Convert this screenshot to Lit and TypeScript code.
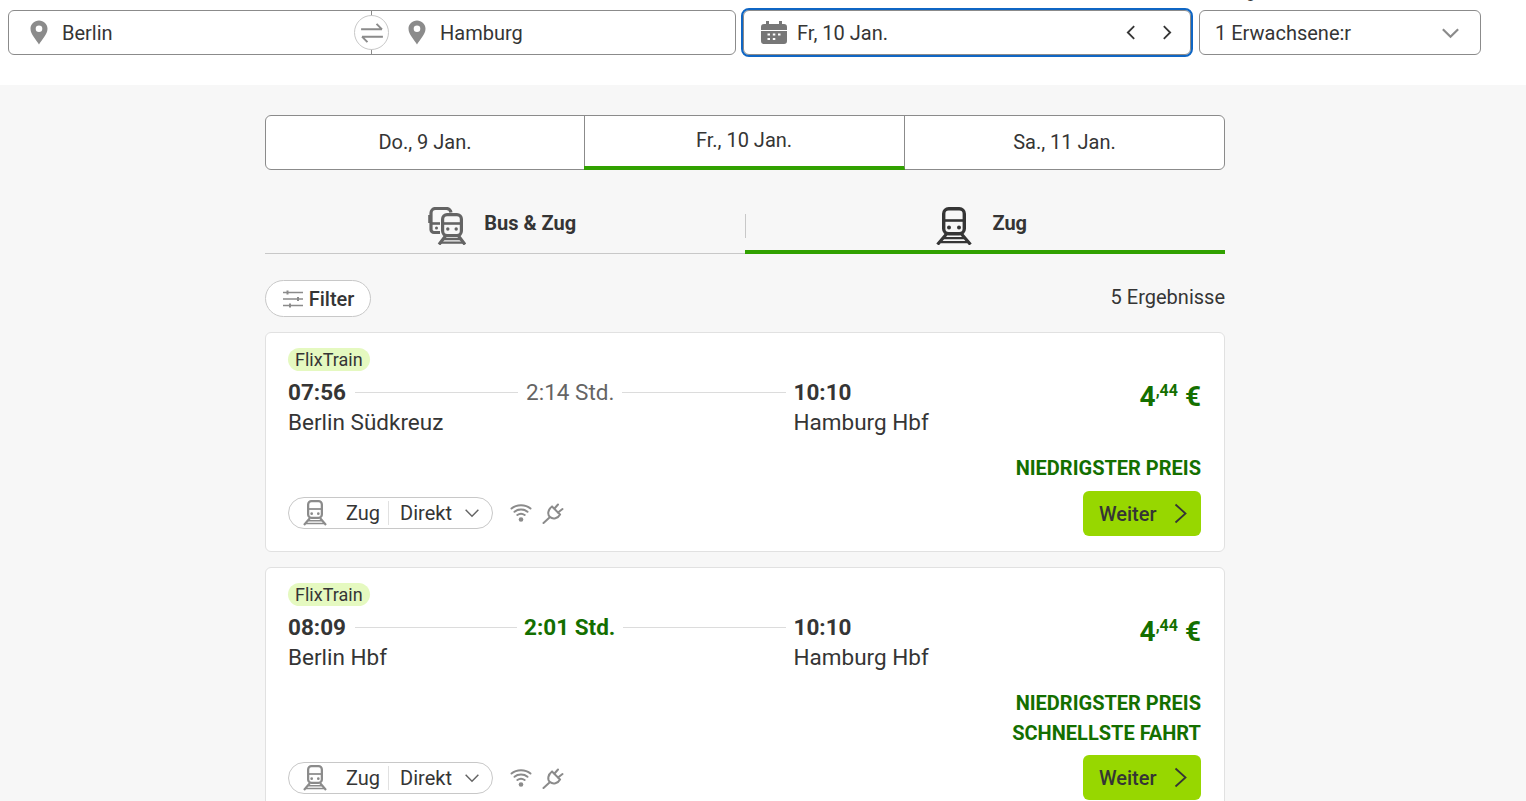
import { LitElement, html, css } from "lit";
import { customElement } from "lit/decorators.js";

const train = (size: number, color: string) => html`<svg width=${size} height=${size * 38 / 36} viewBox="0 0 36 38" fill="none" stroke=${color} stroke-width="3.4">
  <rect x="7.7" y="1.7" width="20.600" height="25" rx="5"/>
  <path d="M7.500 13.500h21" stroke-width="2.600"/>
  <circle cx="13" cy="20.500" r="2" fill=${color} stroke="none"/><circle cx="23" cy="20.500" r="2" fill=${color} stroke="none"/>
  <path d="M10.500 27L1.500 37.500M25.500 27l9 10.500" stroke-width="3.200"/>
  <path d="M8 31.200h20M4.500 35.200h27" stroke-width="2.200"/>
</svg>`;

const busTrain = html`<svg width="38" height="38" viewBox="0 0 38 38" fill="none" stroke="#646464" stroke-width="3.200">
  <path d="M12 25.500H6a3 3 0 0 1-3-3V6a4.500 4.500 0 0 1 4.500-4.500h11a4.500 4.500 0 0 1 4.500 4"/>
  <path d="M1.500 8v8" stroke-width="2.600"/><path d="M3 16.500h9" stroke-width="2.600"/>
  <circle cx="8.500" cy="21" r="1.500" fill="#646464" stroke="none"/>
  <rect x="14.600" y="7.600" width="18.800" height="21" rx="4.500"/>
  <path d="M14.500 16.500h19" stroke-width="2.600"/>
  <circle cx="19.800" cy="22" r="1.700" fill="#646464" stroke="none"/><circle cx="28.200" cy="22" r="1.700" fill="#646464" stroke="none"/>
  <path d="M17.500 29l-6.500 8.500M30.500 29l6.500 8.500" />
  <path d="M16 32.200h16M13 35.700h22" stroke-width="2.200"/>
</svg>`;

const pin = html`<svg class="pin" width="18" height="25" viewBox="0 0 18 25"><path fill-rule="evenodd" fill="#8b8b8b" d="M9 0.500C4.200 0.500 0.500 4.200 0.500 8.800 0.500 14.500 6.500 20 9 24.500 11.500 20 17.500 14.500 17.500 8.800 17.500 4.200 13.800 0.500 9 0.500ZM9 5.500a3.300 3.300 0 1 1 0 6.600 3.300 3.300 0 0 1 0-6.600Z"/></svg>`;

const chevron = (d: "l" | "r" | "d", w: number, h: number, color: string, sw = 2) => {
  const p = d === "l" ? "M9 1L2 8l7 7" : d === "r" ? "M2 1l7 7-7 7" : "M1 2l7 7 7-7";
  const vb = d === "d" ? "0 0 16 11" : "0 0 11 16";
  return html`<svg width=${w} height=${h} viewBox=${vb} fill="none" stroke=${color} stroke-width=${sw}><path d=${p}/></svg>`;
};

const btnChevron = html`<svg width="13" height="21" viewBox="0 0 13 21" fill="none" stroke="#353535" stroke-width="1.800"><path d="M1.500 1.500l10 9-10 9"/></svg>`;

const wifi = html`<svg width="22" height="20" viewBox="0 0 22 20" fill="none" stroke="#8b8b8b" stroke-width="2" stroke-linecap="round">
  <path d="M1.500 5.500C6.500 1 15.500 1 20.500 5.500M4.500 8.800C8 5.800 14 5.800 17.500 8.800M7.300 12C9.500 10.400 12.500 10.400 14.700 12"/>
  <circle cx="11" cy="16.500" r="2.300" fill="#8b8b8b" stroke="none"/>
</svg>`;

const plug = html`<svg width="22" height="22" viewBox="0 0 22 22" fill="none" stroke="#8b8b8b" stroke-width="2" stroke-linecap="round">
  <path d="M10 4.500L18 12.500C16 16.500 11 17.500 8 15 5 12.500 6 7.500 10 4.500Z"/>
  <path d="M12.500 6.500L16 2.500M16 10.500L20.500 7M7.500 15.500L1.500 21"/>
</svg>`;

const filterIcon = html`<svg width="22" height="18" viewBox="0 0 22 18" fill="none" stroke="#8b8b8b" stroke-width="1.600">
  <path d="M1 2.500h20M1 9h20M1 15.500h20"/>
  <path d="M5.500 0.500v4M16 7v4M8 13.500v4" stroke-width="2"/>
</svg>`;

const swap = html`<svg width="24" height="20" viewBox="0 0 26 22" fill="none" stroke="#8b8b8b" stroke-width="2.200"><path d="M1 7h23M18 1l6 6M25 15H2M8 21l-6-6"/></svg>`;

const cal = html`<svg width="26" height="23" viewBox="0 0 26 23"><path fill="#777" d="M5 0h3v3h10V0h3v3h2a3 3 0 0 1 3 3v3H0V6a3 3 0 0 1 3-3h2ZM0 10h26v10a3 3 0 0 1-3 3H3a3 3 0 0 1-3-3Z"/><g fill="#fff"><rect x="6.500" y="12.500" width="2.500" height="2"/><rect x="11.800" y="12.500" width="2.500" height="2"/><rect x="17" y="12.500" width="2.500" height="2"/><rect x="6.500" y="17" width="2.500" height="2"/><rect x="11.800" y="17" width="2.500" height="2"/></g></svg>`;

interface Conn { dep: string; from: string; dur: string; fast: boolean; labels: string[]; }
const conns: Conn[] = [
  { dep: "07:56", from: "Berlin Südkreuz", dur: "2:14 Std.", fast: false, labels: ["NIEDRIGSTER PREIS"] },
  { dep: "08:09", from: "Berlin Hbf", dur: "2:01 Std.", fast: true, labels: ["NIEDRIGSTER PREIS", "SCHNELLSTE FAHRT"] },
];

@customElement("app-root")
export class AppRoot extends LitElement {
  static styles = css`
    :host { display: block; height: 801px; overflow: hidden; background: #f7f7f7; font-family: Roboto, sans-serif; color: #353535; font-size: 20px; }
    .top { height: 85px; box-sizing: border-box; background: #fff; display: flex; gap: 8px; padding: 10px 0 0 8px; }
    .box { height: 45px; box-sizing: border-box; border: 1px solid #8b8b8b; border-radius: 6px; display: flex; align-items: center; background: #fff; }
    .route { width: 728px; position: relative; }
    .route .half { display: flex; align-items: center; height: 100%; box-sizing: border-box; }
    .route .half.a { flex: 0 0 363px; padding-left: 21px; border-right: 1px solid #8b8b8b; }
    .route .half.b { flex: 1; padding-left: 36px; }
    .route .half span { margin-left: 14px; }
    .swap { position: absolute; left: 345px; top: 4px; width: 35px; height: 35px; box-sizing: border-box; border: 1px solid #c8c8c8; border-radius: 50%; background: #fff; display: flex; align-items: center; justify-content: center; }
    .date { width: 448px; margin-left: -1px; padding: 0 18px 0 17px; outline: 2px solid #0f66c4; }
    .date .t { margin-left: 10px; flex: 1; }
    .date .nav { display: flex; gap: 26px; align-items: center; }
    .pax { width: 282px; padding: 0 20px 0 15px; justify-content: space-between; position: relative; }
    .plabel { position: absolute; left: 15px; top: -28px; font-size: 16px; line-height: 20px; }
    main { width: 960px; margin-left: 265px; padding-top: 30px; }
    .days { display: flex; height: 55px; box-sizing: border-box; border: 1px solid #8b8b8b; border-radius: 6px; background: #fff; }
    .day { flex: 1; display: flex; align-items: center; justify-content: center; border-right: 1px solid #8b8b8b; box-sizing: border-box; padding-bottom: 2px; }
    .day:first-child { flex: 0 0 319px; }
    .day:last-child { border-right: 0; }
    .day.on { flex: 0 0 321px; margin-left: -1px; border-bottom: 4px solid #31a100; margin-bottom: -1px; padding-bottom: 3px; }
    .modes { display: flex; height: 84px; box-sizing: border-box; border-bottom: 1px solid #c8c8c8; }
    .mode { flex: 1; display: flex; align-items: center; justify-content: center; gap: 18px; padding: 28px 5px 0 0; margin-bottom: -1px; box-sizing: border-box; font-weight: 700; position: relative; }
    .mode span { margin-bottom: 6px; }
    .mode.off::after { content: ""; position: absolute; right: -1px; top: 44px; height: 24px; width: 1px; background: #c8c8c8; }
    .mode.on { border-bottom: 4px solid #31a100; padding: 32px 6px 0 0; gap: 20px; }
    .bar { display: flex; justify-content: space-between; align-items: center; margin: 26px 0 15px; height: 37px; }
    .bar .count { padding-bottom: 4px; }
    .filter { width: 106px; height: 37px; box-sizing: border-box; border: 1px solid #c8c8c8; border-radius: 19px; background: #fff; display: flex; align-items: center; justify-content: center; gap: 5px; font-weight: 500; }
    .card { background: #fff; border: 1px solid #e1e1e1; border-radius: 6px; box-sizing: border-box; padding: 15px 23px 15px 22px; margin-bottom: 15px; }
    .badge { display: block; width: fit-content; height: 23px; line-height: 23px; padding: 0 7px; background: #e5f9c0; border-radius: 12px; font-size: 18px; }
    .main { display: flex; margin-top: 6px; }
    .left { width: 505.500px; }
    .times { display: flex; align-items: center; height: 30px; }
    .time { font-size: 22.500px; font-weight: 700; }
    .line { flex: 1; height: 1px; background: #dcdcdc; }
    .l1 { margin-left: 9px; }
    .l2 { margin-right: 8px; }
    .dur { font-size: 22.500px; color: #646464; margin: 0 8px; }
    .dur.fast { color: #146f00; font-weight: 700; margin: 0 8px 0 7px; }
    .st { font-size: 22.500px; height: 30px; line-height: 30px; }
    .right { flex: 1; display: flex; justify-content: flex-end; }
    .price { color: #146f00; font-size: 28px; font-weight: 700; margin-top: 3px; line-height: 34px; white-space: nowrap; }
    .price sup { font-size: 16px; vertical-align: 10px; line-height: 0; }
    .bottom { display: flex; justify-content: space-between; align-items: flex-end; margin-top: 16px; }
    .amen { display: flex; align-items: center; gap: 12px; margin-bottom: 7px; }
    .amen.tall { margin-bottom: 6px; }
    .pill { width: 205px; height: 32px; box-sizing: border-box; border: 1px solid #c8c8c8; border-radius: 16px; display: flex; align-items: center; padding-left: 14px; background: #fff; }
    .pill .z { margin-left: 19px; padding-right: 8px; border-right: 1px solid #e1e1e1; line-height: 24px; }
    .pill .d { margin-left: 11px; margin-right: 12px; }
    .icons { display: flex; align-items: center; gap: 10px; margin-left: 5px; }
    .act { display: flex; flex-direction: column; align-items: flex-end; }
    .lab { color: #146f00; font-weight: 700; height: 30px; line-height: 30px; }
    .lab + .lab { margin-bottom: -1px; }
    .btn { width: 118px; height: 45px; margin-top: 8px; box-sizing: border-box; border-radius: 6px; background: #97d700; display: flex; align-items: center; justify-content: space-between; padding: 0 14px 0 16px; font-weight: 500; }
  `;

  render() {
    return html`
      <div class="top">
        <div class="box route">
          <div class="half a">${pin}<span>Berlin</span></div>
          <div class="half b">${pin}<span>Hamburg</span></div>
          <div class="swap">${swap}</div>
        </div>
        <div class="box date">${cal}<span class="t">Fr, 10 Jan.</span>
          <div class="nav">${chevron("l", 10, 15, "#353535")}${chevron("r", 10, 15, "#353535")}</div>
        </div>
        <div class="box pax"><span class="plabel">Fahrgäste</span><span>1 Erwachsene:r</span>${chevron("d", 19, 12, "#8b8b8b")}</div>
      </div>
      <main>
        <div class="days">
          <div class="day">Do., 9 Jan.</div>
          <div class="day on">Fr., 10 Jan.</div>
          <div class="day">Sa., 11 Jan.</div>
        </div>
        <div class="modes">
          <div class="mode off">${busTrain}<span>Bus &amp; Zug</span></div>
          <div class="mode on">${train(36, "#353535")}<span>Zug</span></div>
        </div>
        <div class="bar">
          <div class="filter">${filterIcon}<span>Filter</span></div>
          <span class="count">5 Ergebnisse</span>
        </div>
        ${conns.map((c) => html`
          <div class="card">
            <span class="badge">FlixTrain</span>
            <div class="main">
              <div class="left">
                <div class="times">
                  <span class="time">${c.dep}</span>
                  <span class="line l1"></span>
                  <span class="dur ${c.fast ? "fast" : ""}">${c.dur}</span>
                  <span class="line l2"></span>
                </div>
                <div class="st">${c.from}</div>
              </div>
              <div>
                <div class="times"><span class="time">10:10</span></div>
                <div class="st">Hamburg Hbf</div>
              </div>
              <div class="right"><div class="price">4<sup>,44</sup> €</div></div>
            </div>
            <div class="bottom">
              <div class="amen ${c.labels.length > 1 ? "tall" : ""}">
                <div class="pill">${train(24, "#8b8b8b")}<span class="z">Zug</span><span class="d">Direkt</span>${chevron("d", 16, 10, "#646464", 1.6)}</div>
                <div class="icons">${wifi}${plug}</div>
              </div>
              <div class="act">
                ${c.labels.map((l) => html`<div class="lab">${l}</div>`)}
                <div class="btn"><span>Weiter</span>${btnChevron}</div>
              </div>
            </div>
          </div>`)}
      </main>
    `;
  }
}
